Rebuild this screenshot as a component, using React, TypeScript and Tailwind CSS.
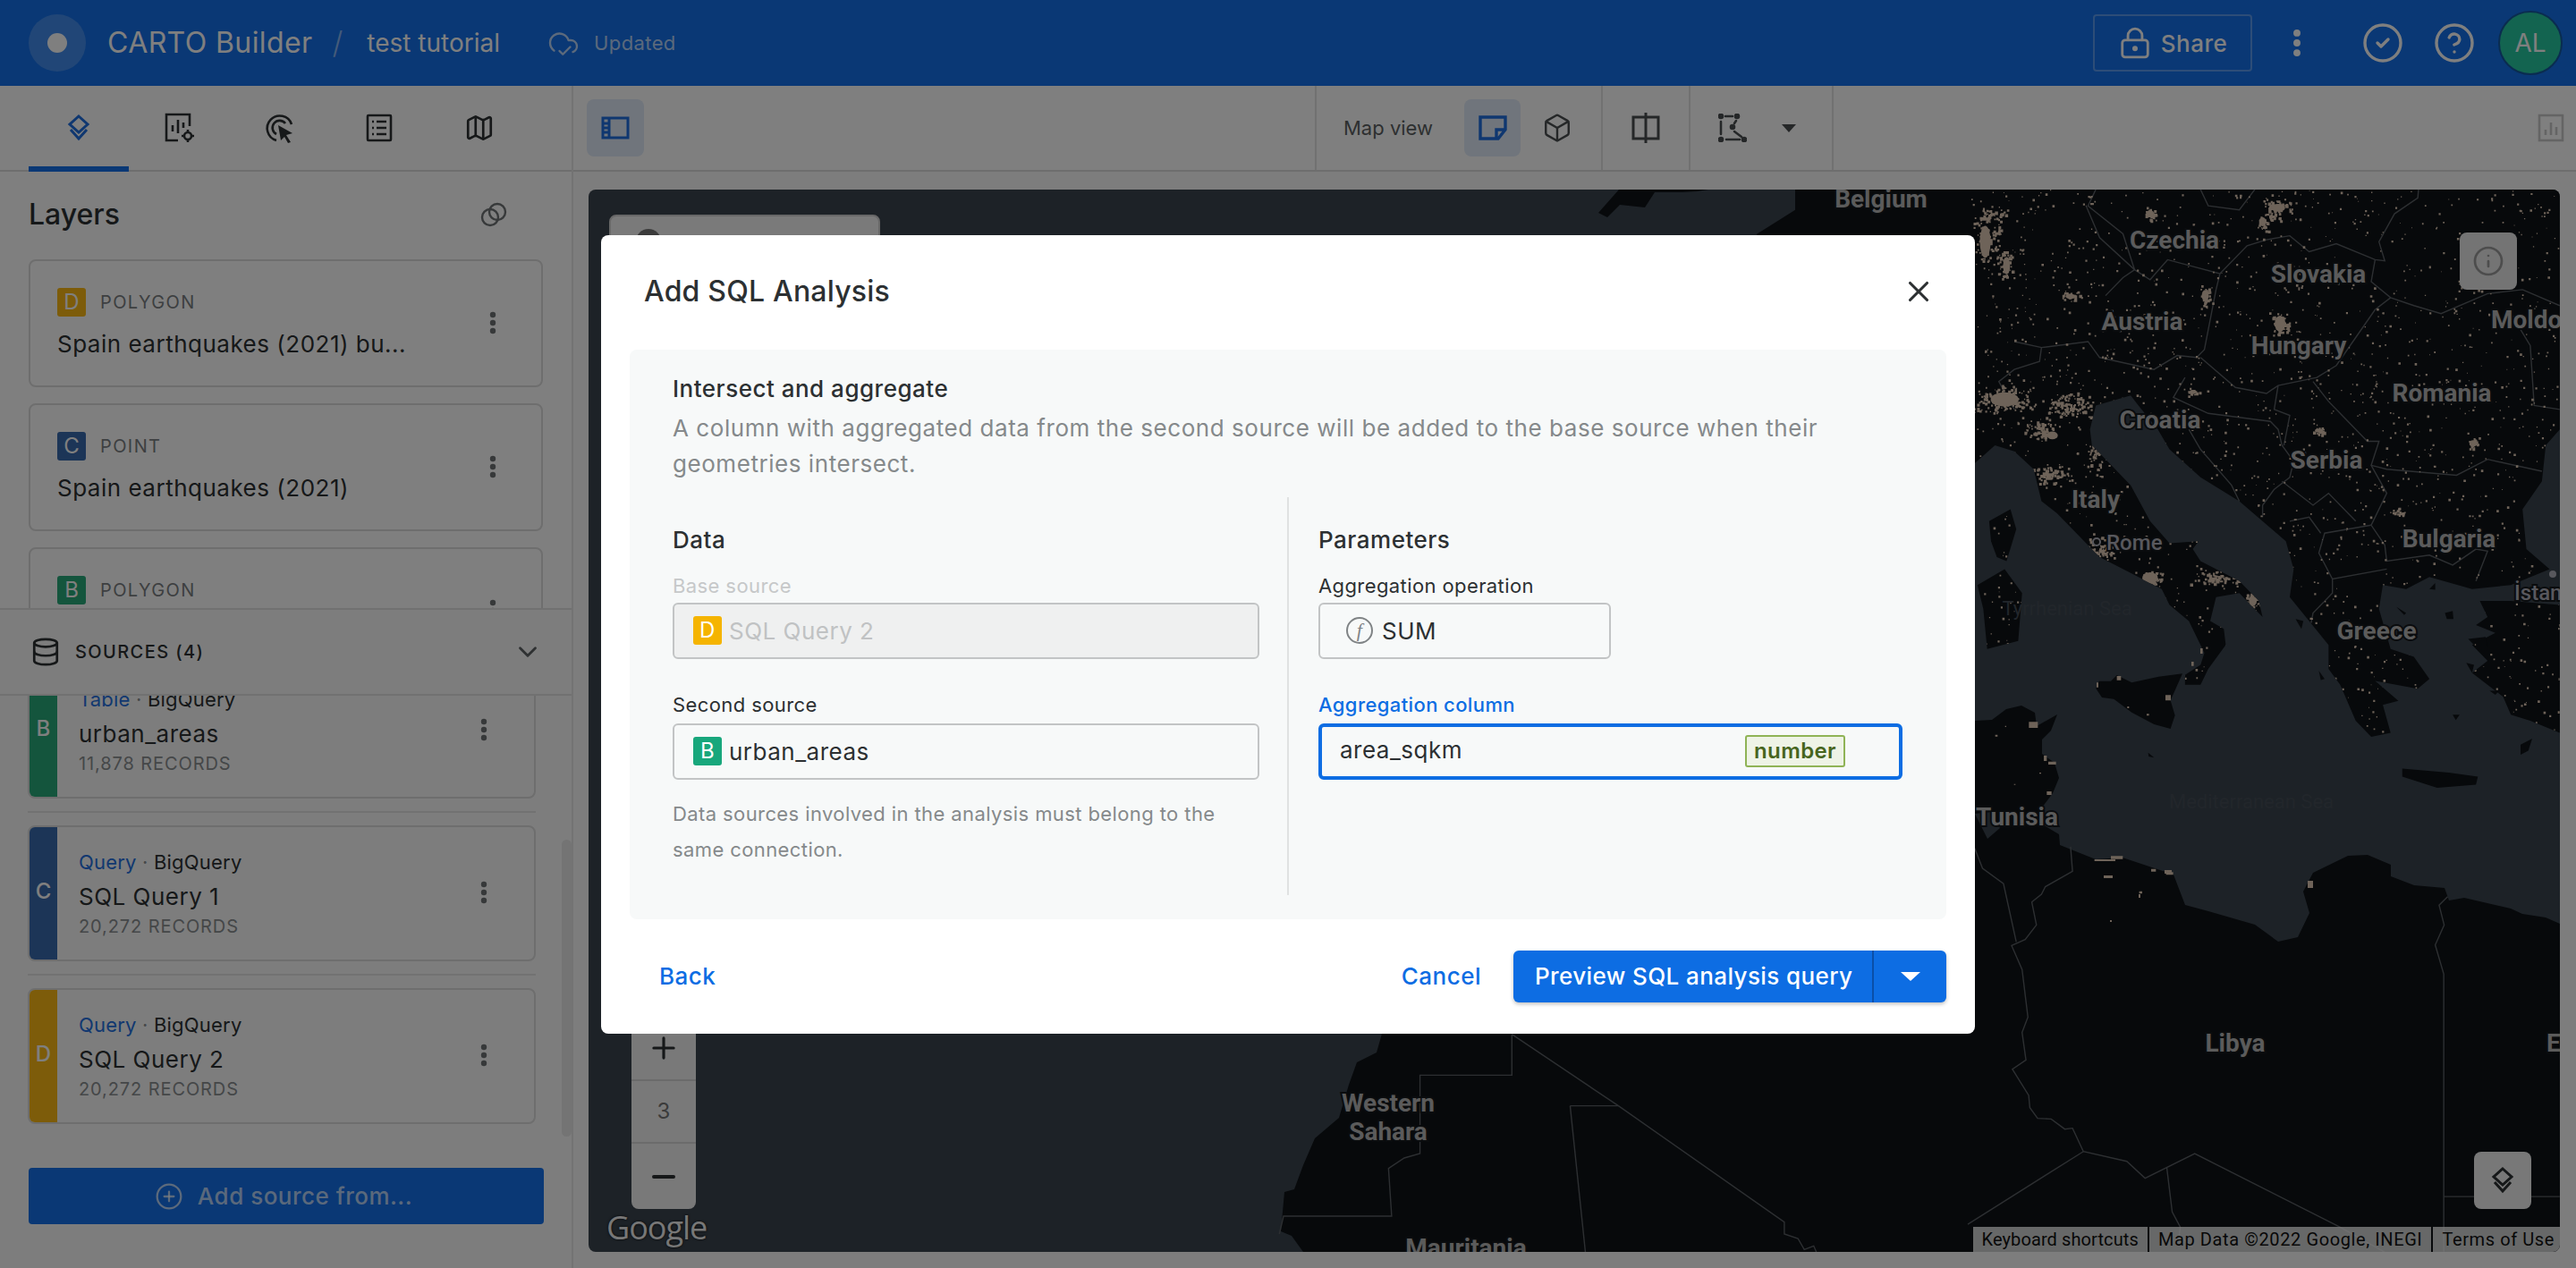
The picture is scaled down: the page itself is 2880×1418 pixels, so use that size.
import React from "react";
import { Box, ChevronDown, CircleCheck, CircleHelp, CirclePlus, CloudCheck, Database, Info, LockKeyhole, Map as MapIcon, Minus, Plus, X } from "lucide-react";

const Kebab: React.FC<{ className?: string }> = ({ className }) => (
  <svg width="8" height="26" viewBox="0 0 8 26" className={className} fill="currentColor">
    <circle cx="4" cy="4" r="3.2" />
    <circle cx="4" cy="13" r="3.2" />
    <circle cx="4" cy="22" r="3.2" />
  </svg>
);

const LayersGlyph: React.FC<{ className?: string }> = ({ className }) => (
  <svg width="32" height="32" viewBox="0 0 32 32" fill="none" stroke="currentColor" strokeWidth="3" className={className}>
    <path d="M16 3 L26 12 L16 21 L6 12 Z" />
    <path d="M7 18 L16 28 L25 18" />
  </svg>
);

const Badge: React.FC<{ letter: string; color: string }> = ({ letter, color }) => (
  <span className={`flex h-8 w-8 items-center justify-center rounded-[3px] text-[24px] leading-none text-white ${color}`}>{letter}</span>
);

const LayerCard: React.FC<{ letter: string; color: string; kind: string; name: string }> = ({ letter, color, kind, name }) => (
  <div className="mb-[18px] flex h-[143px] shrink-0 rounded-lg border-2 border-[#dcdcdc] pl-[30px] pr-[50px] pt-[30px]">
    <div className="flex-1">
      <div className="flex items-center gap-4">
        <Badge letter={letter} color={color} />
        <span className="text-[20px] tracking-[1.4px] text-[#7b7f82]">{kind}</span>
      </div>
      <div className="mt-[14px] text-[26px] leading-[34px] tracking-[0.5px] text-[#2c3032]">{name}</div>
    </div>
    <Kebab className="mt-[26px] text-[#6f7375]" />
  </div>
);

const SourceCard: React.FC<{ letter: string; color: string; kind: string; name: string; records: string }> = ({ letter, color, kind, name, records }) => (
  <div className="flex h-[152px] w-[568px] shrink-0 overflow-hidden rounded-lg border-2 border-[#dcdcdc]">
    <div className={`flex w-[31px] justify-center pt-[52px] text-[24px] font-medium leading-[40px] text-white ${color}`}>{letter}</div>
    <div className="flex-1 pl-6 pt-[24px]">
      <div className="text-[22px] leading-[30px] tracking-[0.2px] text-[#2c3032]">
        <span className="text-[#2470e0]">{kind}</span> <span className="text-[#8b8f92]">·</span> BigQuery
      </div>
      <div className="mt-[6px] text-[26px] leading-[36px] tracking-[0.5px] text-[#2c3032]">{name}</div>
      <div className="mt-[1px] text-[20px] leading-[28px] tracking-[0.9px] text-[#8a8e91]">{records}</div>
    </div>
    <Kebab className="mr-[52px] mt-[60px] text-[#6f7375]" />
  </div>
);

const Header: React.FC = () => (
  <header className="flex h-24 shrink-0 items-center bg-[#1470ea] pl-8 pr-[15px] text-white">
    <div className="flex h-16 w-16 items-center justify-center rounded-full bg-white/20">
      <div className="h-[22px] w-[22px] rounded-full bg-white" />
    </div>
    <span className="ml-6 text-[32px] font-normal leading-none tracking-[0.4px]">CARTO Builder</span>
    <span className="ml-[22px] text-[34px] font-light leading-none text-white/50">/</span>
    <span className="ml-[27px] text-[28px] leading-none">test tutorial</span>
    <CloudCheck size={36} strokeWidth={1.6} className="ml-[53px] text-white/70" />
    <span className="ml-4 text-[22px] leading-none tracking-[0.4px] text-white/70">Updated</span>
    <div className="ml-auto flex h-16 w-[178px] items-center justify-center gap-[10px] rounded-[4px] border-2 border-white/30">
      <LockKeyhole size={38} strokeWidth={1.8} />
      <span className="text-[26px] font-medium tracking-[0.5px]">Share</span>
    </div>
    <Kebab className="ml-[45px] h-[32px] w-[10px] text-white" />
    <CircleCheck size={48} strokeWidth={1.7} className="ml-[67px]" />
    <CircleHelp size={48} strokeWidth={1.7} className="ml-8" />
    <div className="ml-[25px] flex h-[72px] w-[72px] items-center justify-center rounded-full border-2 border-[#14589f] bg-[#26c8a0] text-[28px]">AL</div>
  </header>
);

const Sidebar: React.FC = () => (
  <aside className="flex w-[641px] shrink-0 flex-col border-r-2 border-[#e6e6e6] bg-white">
    <nav className="flex h-24 shrink-0 border-b-2 border-[#dcdcdc] pl-8 text-[#2c3032]">
      <div className="flex h-24 w-28 items-center justify-center border-b-[6px] border-[#1470ea] pt-1 text-[#1f6fe0]">
        <LayersGlyph />
      </div>
      <div className="flex h-[94px] w-28 items-center justify-center">
        <svg width="36" height="36" viewBox="0 0 36 36" fill="none" stroke="currentColor" strokeWidth="2.6">
          <path d="M17 32 H4 V3 H30 V16" />
          <path d="M11 22 V15 M17 24 V9 M23 18 V12" />
          <circle cx="28" cy="27" r="4" />
          <path d="M28 20 V23 M28 31 V34 M21 27 H24 M32 27 H35" />
        </svg>
      </div>
      <div className="flex h-[94px] w-28 items-center justify-center">
        <svg width="36" height="36" viewBox="0 0 36 36" fill="none" stroke="currentColor" strokeWidth="2.6">
          <path d="M15 32 A14 14 0 1 1 32 14" />
          <path d="M15 25 A8 8 0 1 1 25 13" />
          <path d="M17 15 L33 24 L26 26 L31 34 L28 35 L24 28 L20 32 Z" fill="currentColor" stroke="none" />
        </svg>
      </div>
      <div className="flex h-[94px] w-28 items-center justify-center">
        <svg width="32" height="32" viewBox="0 0 32 32" fill="none" stroke="currentColor" strokeWidth="2.6">
          <rect x="3" y="2" width="26" height="28" rx="1" />
          <path d="M8 9 H10 M13 9 H24 M8 16 H10 M13 16 H24 M8 23 H10 M13 23 H24" />
        </svg>
      </div>
      <div className="flex h-[94px] w-28 items-center justify-center">
        <MapIcon size={34} strokeWidth={1.9} />
      </div>
    </nav>

    <section className="relative h-[488px] shrink-0 overflow-hidden px-8">
      <div className="flex h-[98px] items-center justify-between pb-[2px] pr-[40px]">
        <h2 className="text-[32px] font-medium leading-none text-[#2c3032]">Layers</h2>
        <svg width="30" height="30" viewBox="0 0 30 30" fill="none" stroke="#6f7375" strokeWidth="2.4">
          <circle cx="11" cy="18" r="9" />
          <circle cx="19" cy="12" r="9" />
        </svg>
      </div>
      <LayerCard letter="D" color="bg-[#fab914]" kind="POLYGON" name="Spain earthquakes (2021) bu..." />
      <LayerCard letter="C" color="bg-[#386aae]" kind="POINT" name="Spain earthquakes (2021)" />
      <LayerCard letter="B" color="bg-[#28aa7a]" kind="POLYGON" name="urban_areas" />
    </section>

    <div className="relative z-10 flex h-[98px] shrink-0 items-center border-y-2 border-[#e2e2e2] bg-[#fafbfb] pl-[34px] pr-[32px]">
      <Database size={34} strokeWidth={1.9} className="text-[#2c3032]" />
      <span className="ml-4 text-[20px] font-medium tracking-[1.4px] text-[#2c3032]">SOURCES (4)</span>
      <ChevronDown size={34} strokeWidth={2} className="ml-auto text-[#5e6264]" />
    </div>

    <div className="relative -mt-[37px] flex min-h-0 flex-1 flex-col bg-[#fafbfb] pl-[31px]">
      <SourceCard letter="B" color="bg-[#28aa7a]" kind="Table" name="urban_areas" records="11,878 RECORDS" />
      <div className="my-[14px] h-[2px] w-[568px] bg-[#e4e4e4]" />
      <SourceCard letter="C" color="bg-[#386aae]" kind="Query" name="SQL Query 1" records="20,272 RECORDS" />
      <div className="my-[14px] h-[2px] w-[568px] bg-[#e4e4e4]" />
      <SourceCard letter="D" color="bg-[#fab914]" kind="Query" name="SQL Query 2" records="20,272 RECORDS" />
      <button className="ml-px mt-[49px] flex h-[63px] w-[576px] items-center justify-center gap-[16px] rounded-[4px] bg-[#1470ea] pr-[6px] text-[26px] font-medium tracking-[0.5px] text-white/70">
        <CirclePlus size={32} strokeWidth={1.7} />
        Add source from...
      </button>
      <div className="absolute right-0 top-[198px] h-[332px] w-[11px] rounded-full bg-[#e8e8e8]" />
    </div>
  </aside>
);

const Toolbar: React.FC = () => (
  <div className="flex h-24 shrink-0 border-b-2 border-[#dcdcdc] bg-white text-[#4a4e50]">
    <div className="flex w-[829px] items-center pl-[15px]">
      <div className="flex h-16 w-16 items-center justify-center rounded-lg bg-[#e0eaf8] text-[#1f6fe0]">
        <svg width="32" height="26" viewBox="0 0 32 26" fill="none" stroke="currentColor" strokeWidth="3">
          <rect x="2" y="2" width="28" height="22" />
          <path d="M9 2 V24 M3 8 H8 M3 13 H8 M3 18 H8" />
        </svg>
      </div>
    </div>
    <div className="flex w-[320px] items-center border-l-2 border-[#e2e2e2] pl-[30px]">
      <span className="w-[105px] text-[22px] text-[#5b5f61]">Map view</span>
      <div className="ml-[30px] flex h-16 w-[63px] items-center justify-center rounded-lg bg-[#e0eaf8] text-[#1f6fe0]">
        <svg width="32" height="28" viewBox="0 0 32 28" fill="none" stroke="currentColor" strokeWidth="3.4">
          <path d="M2 2 H30 V16 L22 26 H2 Z M20 26 V16 H30" />
        </svg>
      </div>
      <Box size={34} strokeWidth={1.7} className="ml-[24px]" />
    </div>
    <div className="flex w-[98px] items-center justify-center border-l-2 border-[#e2e2e2]">
      <svg width="32" height="34" viewBox="0 0 32 34" fill="none" stroke="currentColor" strokeWidth="3">
        <rect x="2" y="5" width="28" height="24" />
        <path d="M16 0 V34" />
      </svg>
    </div>
    <div className="flex w-[162px] items-center gap-[39px] border-x-2 border-[#e2e2e2] pl-[31px]">
      <svg width="32" height="32" viewBox="0 0 32 32" fill="none" stroke="currentColor" strokeWidth="2.6" strokeLinecap="round">
        <circle cx="3" cy="3" r="2" fill="currentColor" />
        <circle cx="21" cy="3" r="2" fill="currentColor" />
        <circle cx="3" cy="29" r="2" fill="currentColor" />
        <circle cx="29" cy="29" r="2" fill="currentColor" />
        <circle cx="16" cy="15" r="2" fill="currentColor" />
        <path d="M8 3 H16 M3 9 V23 M9 29 H24 M20 8 L18 11 M18 20 L26 26" />
      </svg>
      <span className="h-0 w-0 border-x-[8px] border-t-[9px] border-x-transparent border-t-[#4a4e50]" />
    </div>
    <div className="flex flex-1 items-center justify-end pr-[12px] text-[#c8c8c8]">
      <svg width="32" height="32" viewBox="0 0 32 32" fill="none" stroke="currentColor" strokeWidth="2.6">
        <rect x="3" y="2" width="26" height="28" />
        <path d="M10 24 V18 M16 24 V10 M22 24 V15" />
      </svg>
    </div>
  </div>
);

const MAINLAND =
  "-445,49 -445,100 -544,161 -300,600 18,735 70,690 120,705 170,750 190,830 230,860 290,920 340,970 420,1010 500,1050 520,1090 570,1130 610,1210 600,1240 560,1265 560,1290 600,1290 620,1250 665,1190 660,1150 625,1130 640,1070 700,1060 760,1120 750,1080 700,1030 600,980 580,950 595,930 520,935 470,880 420,790 370,740 320,690 315,650 330,590 420,565 440,590 490,650 520,700 600,770 700,830 820,930 840,1000 830,1070 880,1130 930,1190 930,1250 960,1290 1000,1380 1040,1420 1090,1410 1070,1340 1110,1330 1050,1280 1160,1300 1190,1275 1150,1220 1090,1200 1060,1100 1070,1040 1130,1050 1190,1020 1300,1050 1400,1040 1500,1000 1440,950 1430,850 1480,780 1490,690 1526,650 1526,49";
const CORSICA = "55,880 110,850 125,900 100,980 75,970 60,930";
const SARDINIA = "25,1040 95,1000 140,1060 130,1180 50,1200 40,1100";
const TURKEY = "1526,1090 1400,1080 1320,1080 1340,1120 1310,1140 1360,1160 1300,1190 1340,1230 1300,1260 1380,1320 1400,1365 1450,1380 1526,1410";
const CRETE = "1120,1500 1240,1510 1315,1520 1310,1540 1210,1548 1120,1520";
const ISLANDS = [
  "1230,1110 1250,1105 1252,1125 1235,1125",
  "1190,1050 1205,1035 1205,1052",
  "1290,1175 1335,1170 1340,1195 1310,1195",
  "1105,1095 1130,1110 1125,1115",
  "905,1255 920,1275 910,1278",
  "845,1125 865,1130 860,1150",
  "1425,1440 1455,1425 1445,1455 1425,1465",
  "1250,1365 1268,1365 1258,1378",
  "1345,1305 1370,1305 1360,1315",
  "1285,1235 1305,1240 1300,1260",
];
const SICILY = "430,210 440,185 480,185 500,165 530,180 550,190 640,170 720,160 680,250 695,300 680,345 625,330 550,290 490,245 450,240";

const AFRICA =
  "1545,1156 1539,1177 1517,1188 1508,1213 1497,1250 1470,1273 1457,1303 1447,1330 1436,1333 1432,1377 1444,1382 1457,1400 2862,1400 2862,1033 2846,1026 2820,1022 2807,1016 2755,1004 2738,1007 2733,993 2699,990 2673,980 2673,967 2647,956 2625,957 2586,976 2575,997 2582,1021 2569,1048 2547,1053 2521,1034 2469,1019 2443,1012 2430,978 2373,959 2343,961 2303,945 2302,933 2280,920 2283,903 2295,887 2302,870 2297,853 2283,843 2283,827 2293,817 2300,799 2277,812 2275,797 2260,789 2243,793 2227,805 2208,806 1800,900";

const BORDERS_EU = [
  "305,90 340,170 430,250 470,275 515,225 650,260 640,300",
  "650,260 720,190 770,175 830,165 880,205 950,185 1050,225 1075,228 1060,180 1100,110 1160,70 1162,49",
  "355,315 400,270 430,250",
  "120,430 190,445 310,430 340,470 480,500 540,465 590,470 610,450 640,300",
  "190,445 185,480 120,500 80,530 120,600",
  "600,470 690,545 770,560 800,540 900,520 950,490 1000,420 1050,350 1090,320",
  "1050,225 1040,280 1090,320 1150,340 1220,360 1340,310 1430,300 1526,340",
  "1400,360 1450,440 1460,590 1526,600",
  "890,530 930,580 970,620 1030,680 1060,680 1040,740 1080,750 1260,765 1340,725 1480,755",
  "560,520 530,570 620,610 780,630 800,650 810,690 840,730 830,770 790,800 760,840 760,870",
  "570,650 600,700 680,790 700,830",
  "800,540 790,600 830,615 815,690",
  "810,780 890,840 930,810 1000,880",
  "1040,740 1080,810 1045,880 1040,890 1075,940 1080,980 1190,965 1250,990 1310,950 1340,955 1310,1030",
  "1040,890 920,910 905,960 940,1025 1080,1000",
  "830,880 880,870 910,910",
  "940,1025 940,1060 890,1110 885,1135",
  "430,250 400,160 310,90 330,49",
  "600,49 620,90 700,100 740,49",
];
const BORDERS_AF = [
  "18,200 38,265 92,315 125,505",
  "265,195 270,275 200,325 190,350 165,375 177,450 148,497 113,517 140,595 155,750 140,800 150,890 115,920 157,1005 160,1045 180,1080 215,1082 250,1115 270,1112 298,1188 410,1220 457,1275 585,1195 960,1435 1075,1516",
  "298,1188 0,1425",
  "513,1240 527,1385 548,1435 545,1460 580,1500",
  "1237,358 1215,385 1228,450 1205,515 1227,610 1227,1516",
  "1227,1335 1526,1335",
];
const BORDERS_SAHARA = [
  "665,20 665,157 490,157 490,420 460,435 430,470 436,630 230,630 222,690",
  "665,20 868,260 1184,650 1184,690 1210,705 1222,742 1240,730 1245,750",
  "776,260 868,260",
  "776,260 805,750",
];

// solid city blobs: cx, cy, rx, ry
const BLOBS = [
  [95, 575, 36, 18], [805, 385, 14, 20], [470, 1022, 20, 14], [1303, 685, 10, 8], [612, 315, 9, 14], [265, 317, 13, 6],
  [45, 180, 14, 40], [100, 240, 9, 22], [905, 653, 10, 5], [580, 556, 8, 5], [470, 110, 10, 9], [800, 95, 18, 10], [760, 130, 9, 11],
  [218, 665, 14, 10], [735, 1080, 10, 12],
];

// city specks, seeded so every render gives the same map
const makeSpecks = () => {
  let seed = 20220;
  const rnd = () => {
    seed = (seed * 1664525 + 1013904223) % 4294967296;
    return seed / 4294967296;
  };
  const clusters = [
    [95, 575, 160, 60, 28], [260, 590, 110, 45, 25], [190, 650, 80, 35, 20], [50, 170, 90, 28, 60], [60, 110, 35, 35, 18],
    [95, 235, 50, 18, 30], [470, 110, 25, 18, 14], [800, 95, 70, 36, 24], [760, 135, 25, 14, 18], [265, 315, 25, 20, 10],
    [610, 315, 25, 14, 20], [805, 385, 50, 20, 24], [1303, 685, 20, 12, 10], [905, 655, 16, 14, 8], [580, 555, 14, 12, 8],
    [470, 1025, 70, 26, 18], [735, 1080, 40, 20, 18], [640, 1020, 70, 50, 14], [215, 760, 70, 42, 18], [340, 950, 60, 30, 28],
    [1105, 855, 16, 14, 8], [330, 720, 40, 20, 28],
  ];
  let d = "";
  for (const [cx, cy, n, sx, sy] of clusters) {
    for (let i = 0; i < n; i++) {
      const x = cx + (rnd() + rnd() - 1) * sx * 1.4;
      const y = cy + (rnd() + rnd() - 1) * sy * 1.4;
      const s = 3 + rnd() * 5;
      d += `M${x.toFixed(0)} ${y.toFixed(0)}h${s.toFixed(0)}v${s.toFixed(0)}h-${s.toFixed(0)}z`;
    }
  }
  for (let i = 0; i < 2600; i++) {
    const x = rnd() * 1530;
    const y = 49 + rnd() * 1500;
    const s = 2 + rnd() * 4;
    d += `M${x.toFixed(0)} ${y.toFixed(0)}h${s.toFixed(0)}v${s.toFixed(0)}h-${s.toFixed(0)}z`;
  }
  return d;
};
const SPECKS = makeSpecks();

const LABELS: [string, number, number][] = [
  ["Belgium", 2103, 232], ["Czechia", 2431, 278], ["Slovakia", 2592, 316], ["Austria", 2395, 369], ["Hungary", 2570, 396],
  ["Romania", 2730, 449], ["Croatia", 2415, 479], ["Serbia", 2601, 524], ["Italy", 2343, 568], ["Bulgaria", 2738, 612],
  ["Greece", 2657, 715], ["Tunisia", 2255, 923], ["Libya", 2499, 1176], ["Western", 1552, 1243], ["Sahara", 1552, 1275], ["Mauritania", 1639, 1405],
];

const MapCanvas: React.FC = () => (
  <div className="relative min-h-0 flex-1 overflow-hidden rounded-lg bg-[#3a444e]">
    <svg viewBox="658 212 2204 1188" className="block h-full w-full">
      <defs>
        <clipPath id="eu-land">
          <polygon points={MAINLAND} />
          <polygon points={CORSICA} />
          <polygon points={SARDINIA} />
          <polygon points={TURKEY} />
        </clipPath>
      </defs>
      <polygon points={AFRICA} fill="#0e1216" />
      <polygon points="1810,212 1787,238 1797,243 1811,229 1839,232 1850,215 1881,215 1897,214 1910,212" fill="#0e1216" />
      <polygon points="2208,910 2222,938 2236,926 2225,908" fill="#3a444e" />
      <g transform="translate(2200 190) scale(0.4337 0.4464)" fill="#0e1216">
        <polygon points={MAINLAND} />
        <polygon points={CORSICA} />
        <polygon points={SARDINIA} />
        <polygon points={TURKEY} />
        <polygon points={CRETE} />
        {ISLANDS.map((p) => (
          <polygon key={p} points={p} />
        ))}
        <g fill="none" stroke="#5a5f64" strokeWidth="1.4">
          {BORDERS_EU.map((p) => (
            <polyline key={p} points={p} vectorEffect="non-scaling-stroke" />
          ))}
        </g>
        <path d={SPECKS} fill="#dcc6b2" clipPath="url(#eu-land)" />
        <g fill="#dcc6b2" clipPath="url(#eu-land)">
          {BLOBS.map(([cx, cy, rx, ry]) => (
            <ellipse key={`${cx}-${cy}`} cx={cx} cy={cy} rx={rx} ry={ry} />
          ))}
        </g>
      </g>
      <g transform="translate(2200 700) scale(0.3333)">
        <polygon points={SICILY} fill="#0e1216" />
        <polygon points="605,425 625,442 607,438" fill="#0e1216" />
        <path
          d="M205 322h30v20h-30zM255 435h10v18h-10zM270 455h26v10h-26zM265 555h16v12h-16zM425 783h70v6h-70zM480 772h40v10h-40zM665 826h24v9h-24zM615 815h16v9h-16zM663 232h18v18h-18zM500 168h14v14h-14zM780 75h8v18h-8zM750 120h8v14h-8zM600 295h8v6h-8zM535 270h6v6h-6zM432 190h6v16h-6zM575 890h10v8h-10zM92 365h8v6h-8zM125 335h4v4h-4zM240 492h6v4h-6zM155 530h5v3h-5z"
          fill="#dcc6b2"
        />
      </g>
      <g transform="translate(2200 880) scale(0.4337 0.3432)" fill="none" stroke="#5a5f64">
        {BORDERS_AF.map((p) => (
          <polyline key={p} points={p} strokeWidth="1.4" vectorEffect="non-scaling-stroke" />
        ))}
      </g>
      <path d="M2352 979h10v3h-10zM2580 985h6v8h-6zM2391 1000h2v4h-2zM2359 1029h2v2h-2zM2420 973h8v4h-8z" fill="#dcc6b2" />
      <g transform="translate(1300 1150) scale(0.5869 0.3333)" fill="none" stroke="#5a5f64">
        {BORDERS_SAHARA.map((p) => (
          <polyline key={p} points={p} strokeWidth="1.4" vectorEffect="non-scaling-stroke" />
        ))}
      </g>
      {LABELS.map(([t, x, y]) => (
        <text
          key={t}
          x={x}
          y={y}
          textAnchor="middle"
          stroke="#14181c"
          strokeWidth="4"
          paintOrder="stroke"
          className="fill-[#b6b6b6] font-['Roboto',sans-serif] text-[28px] font-bold"
        >
          {t}
        </text>
      ))}
      <text x="2785" y="367" stroke="#14181c" strokeWidth="4" paintOrder="stroke" className="fill-[#b6b6b6] font-['Roboto',sans-serif] text-[28px] font-bold">Moldova</text>
      <text x="2847" y="1176" stroke="#14181c" strokeWidth="4" paintOrder="stroke" className="fill-[#b6b6b6] font-['Roboto',sans-serif] text-[28px] font-bold">Egypt</text>
      <text x="2355" y="615" stroke="#14181c" strokeWidth="4" paintOrder="stroke" className="fill-[#b0b0ba] font-['Roboto',sans-serif] text-[24px] font-medium">Rome</text>
      <text x="2811" y="671" stroke="#14181c" strokeWidth="4" paintOrder="stroke" className="fill-[#b0b0ba] font-['Roboto',sans-serif] text-[24px] font-medium">İstanbul</text>
      <circle cx="2344" cy="606" r="4" fill="#14181c" stroke="#b0b0ba" strokeWidth="2" />
      <circle cx="2854" cy="642" r="4" fill="#b0b0ba" />
      <text x="2311" y="688" textAnchor="middle" className="fill-[#444d56] font-['Roboto',sans-serif] text-[22px]">Tyrrhenian Sea</text>
      <text x="2517" y="904" textAnchor="middle" className="fill-[#444d56] font-['Roboto',sans-serif] text-[22px]">Mediterranean Sea</text>
    </svg>

    <div className="absolute left-[23px] top-[28px] h-20 w-[303px] rounded-lg border-2 border-[#d0d0d0] bg-[#f4f4f4] pl-[28px] pt-[14px]">
      <div className="h-7 w-7 rounded-full bg-[#777]" />
    </div>
    <div className="absolute left-[48px] top-[900px] flex h-[240px] w-[72px] flex-col items-center rounded-lg bg-[#f2f2f2] text-[#2c3032]">
      <div className="flex h-[95px] items-center pt-[24px]"><Plus size={38} strokeWidth={2} /></div>
      <div className="flex h-[72px] w-full items-center justify-center border-y-2 border-[#d6d6d6] text-[24px] text-[#777]">3</div>
      <div className="flex flex-1 items-center"><Minus size={38} strokeWidth={2.4} /></div>
    </div>
    <span className="absolute left-[20px] top-[1138px] font-['Open_Sans',sans-serif] text-[36px] leading-[46px] tracking-[-1px] text-[#eeeeee] [text-shadow:0_0_3px_#000]">Google</span>
    <div className="absolute right-[48px] top-[48px] flex h-16 w-16 items-center justify-center rounded-lg bg-[#e8e8e8] text-[#9a9a9a]">
      <Info size={36} strokeWidth={1.8} />
    </div>
    <div className="absolute bottom-[48px] right-[32px] flex h-16 w-16 items-center justify-center rounded-lg bg-[#f0f0f0] text-[#2c3032]">
      <LayersGlyph />
    </div>
    <div className="absolute bottom-0 right-0 flex h-[28px] items-center gap-[2px] font-['Roboto',sans-serif] text-[20px] leading-none text-[#111]">
      <span className="flex h-full items-center bg-white/80 px-[10px] tracking-[0.1px]">Keyboard shortcuts</span>
      <span className="flex h-full items-center bg-white/80 px-[10px] tracking-[0.6px]">Map Data ©2022 Google, INEGI</span>
      <span className="flex h-full items-center bg-white/80 pl-[10px] pr-[6px] tracking-[0.6px]">Terms of Use</span>
    </div>
  </div>
);

const FieldLabel: React.FC<{ children: React.ReactNode; className?: string }> = ({ children, className }) => (
  <div className={`h-8 text-[22px] leading-8 tracking-[0.4px] ${className ?? "text-[#7f8385]"}`}>{children}</div>
);

const Modal: React.FC = () => (
  <div className="flex h-[893px] w-[1536px] flex-col rounded-lg bg-white text-[#2c3032]">
    <div className="flex h-[128px] shrink-0 items-center justify-between pb-[1px] pl-[48px] pr-[44px]">
      <h1 className="text-[32px] font-medium leading-none tracking-[0.2px]">Add SQL Analysis</h1>
      <X size={38} strokeWidth={2} />
    </div>
    <div className="mx-8 h-[637px] shrink-0 rounded-lg bg-[#f7f9f9] pl-12 pt-6">
      <div className="text-[26px] font-medium leading-10 tracking-[0.5px]">Intersect and aggregate</div>
      <p className="mt-1 w-[1320px] text-[26px] leading-10 tracking-[0.55px] text-[#85898b]">
        A column with aggregated data from the second source will be added to the base source when their geometries intersect.
      </p>
      <div className="mt-[17px] flex h-[445px]">
        <div className="w-[689px] border-r-2 border-[#e0e2e2] pr-[31px] pt-8">
          <div className="h-8 text-[26px] font-medium leading-8 tracking-[0.5px]">Data</div>
          <FieldLabel className="mt-[19px] text-[#c6c8c9]">Base source</FieldLabel>
          <div className="mt-[3px] flex h-[63px] items-center gap-[8px] rounded-[6px] border-2 border-[#c2c4c5] bg-[#eff0f0] pl-[21px] text-[26px] tracking-[0.5px] text-[#c0c2c3]">
            <Badge letter="D" color="bg-[#f5b400]" />
            SQL Query 2
          </div>
          <FieldLabel className="mt-[35px]">Second source</FieldLabel>
          <div className="mt-[5px] flex h-[63px] items-center gap-[8px] rounded-[6px] border-2 border-[#c2c4c5] pl-[21px] text-[26px] tracking-[0.5px]">
            <Badge letter="B" color="bg-[#18a77c]" />
            urban_areas
          </div>
          <p className="mt-[18px] text-[22px] leading-10 tracking-[0.4px] text-[#85898b]">
            Data sources involved in the analysis must belong to the same connection.
          </p>
        </div>
        <div className="flex-1 pl-[33px] pt-8">
          <div className="h-8 text-[26px] font-medium leading-8 tracking-[0.5px]">Parameters</div>
          <FieldLabel className="mt-[19px]">Aggregation operation</FieldLabel>
          <div className="mt-[3px] flex h-[63px] w-[327px] items-center rounded-[6px] border-2 border-[#c2c4c5] pl-[29px] text-[26px] tracking-[0.5px]">
            <span className="flex h-[30px] w-[30px] items-center justify-center rounded-full border-2 border-[#7f8385] font-['Liberation_Serif',serif] text-[22px] italic leading-none text-[#7f8385]">f</span>
            <span className="ml-[10px]">SUM</span>
          </div>
          <FieldLabel className="mt-[35px] font-medium text-[#0d6de3]">Aggregation column</FieldLabel>
          <div className="mt-[5px] flex h-[63px] w-[653px] items-center rounded-[6px] border-4 border-[#0d6de3] pl-[20px] text-[26px] tracking-[0.5px]">
            <span className="-mt-1">area_sqkm</span>
            <span className="ml-auto mr-[60px] flex h-9 w-28 items-center justify-center rounded-[3px] border-2 border-[#8fb356] bg-[#eef3e6] text-[24px] font-semibold tracking-[0.4px] text-[#47651d]">number</span>
          </div>
        </div>
      </div>
    </div>
    <div className="flex flex-1 items-center pr-8 text-[26px] font-medium tracking-[0.5px] text-[#0d6de3]">
      <span className="ml-[65px]">Back</span>
      <span className="ml-auto">Cancel</span>
      <div className="ml-9 flex h-[58px] w-[484px] rounded-[6px] bg-[#0d6de3] text-white shadow-[0_2px_4px_rgba(0,0,0,0.25)]">
        <span className="flex w-[403px] items-center whitespace-nowrap border-r-2 border-[#0a4fa8] pl-6 tracking-[0.4px]">Preview SQL analysis query</span>
        <span className="flex flex-1 items-center justify-center">
          <span className="h-0 w-0 border-x-[11px] border-t-[10px] border-x-transparent border-t-white" />
        </span>
      </div>
    </div>
  </div>
);

const App: React.FC = () => (
  <div className="relative flex h-[1418px] w-[2880px] flex-col overflow-hidden bg-white font-['Inter',sans-serif]">
    <Header />
    <div className="flex min-h-0 flex-1">
      <Sidebar />
      <main className="flex min-w-0 flex-1 flex-col bg-[#fafbfb]">
        <Toolbar />
        <div className="flex min-h-0 flex-1 flex-col pb-[18px] pl-[17px] pr-[18px] pt-5">
          <MapCanvas />
        </div>
      </main>
    </div>
    <div className="absolute inset-0 z-20 flex items-center justify-center bg-black/50">
      <Modal />
    </div>
  </div>
);

export default App;
